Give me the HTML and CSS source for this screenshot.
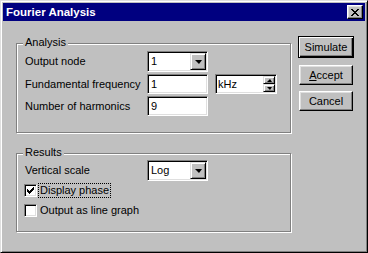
FILE: index.html
```html
<!DOCTYPE html>
<html>
<head>
<meta charset="utf-8">
<link rel="stylesheet" href="styles.css">
</head>
<body>
<div class="win">
  <div class="titlebar">
    <span class="title">Fourier Analysis</span>
    <span class="close"><svg width="8" height="7" viewBox="0 0 8 7" shape-rendering="crispEdges"><path d="M0 0h2v1h-2zM6 0h2v1h-2zM1 1h2v1h-2zM5 1h2v1h-2zM2 2h4v1h-4zM3 3h2v1h-2zM2 4h4v1h-4zM1 5h2v1h-2zM5 5h2v1h-2zM0 6h2v1h-2zM6 6h2v1h-2z" fill="#000"/></svg></span>
  </div>
  <div class="main">
    <div class="left">
      <div class="group g1">
        <div class="caption">Analysis</div>
        <div class="row r-combo">
          <span class="lbl">Output node</span>
          <div class="combo sunken"><span class="val">1</span><span class="ddbtn"><i class="arrow"></i></span></div>
        </div>
        <div class="row r-edit">
          <span class="lbl">Fundamental frequency</span>
          <div class="edit sunken"><span class="val">1</span></div>
          <div class="spin sunken"><span class="val">kHz</span><span class="spinbtns"><span class="sb"><i class="up"></i></span><span class="sb"><i class="dn"></i></span></span></div>
        </div>
        <div class="row r-edit">
          <span class="lbl">Number of harmonics</span>
          <div class="edit sunken"><span class="val">9</span></div>
        </div>
      </div>
      <div class="group g2">
        <div class="caption">Results</div>
        <div class="row r-combo">
          <span class="lbl">Vertical scale</span>
          <div class="combo sunken"><span class="val">Log</span><span class="ddbtn"><i class="arrow"></i></span></div>
        </div>
        <div class="check c1">
          <span class="box sunken"><svg width="7" height="7" viewBox="0 0 7 7" shape-rendering="crispEdges"><path d="M6 0h1v3h-1zM5 1h1v3h-1zM4 2h1v3h-1zM3 3h1v3h-1zM2 4h1v3h-1zM1 3h1v3h-1zM0 2h1v3h-1z" fill="#000"/></svg></span>
          <span class="ctext focus">Display phase</span>
        </div>
        <div class="check c2">
          <span class="box sunken"></span>
          <span class="ctext">Output as line graph</span>
        </div>
      </div>
    </div>
    <div class="right">
      <div class="btn default">Simulate</div>
      <div class="btn b2"><u>A</u>ccept</div>
      <div class="btn b3">Cancel</div>
    </div>
  </div>
</div>
</body>
</html>
```
FILE: styles.css
```css
html, body { margin: 0; padding: 0; background: #c0c0c0; }
body { font-family: "Liberation Sans", Arial, sans-serif; font-size: 11px; color: #000; }
.win {
  width: 368px; height: 253px; box-sizing: border-box;
  background: #c0c0c0;
  border: 1px solid; border-color: #dfdfdf #000 #000 #dfdfdf;
  box-shadow: inset 1px 1px #fff, inset -1px -1px #808080;
  padding: 2px;
}
.titlebar {
  height: 18px; background: #000080; display: flex; align-items: center;
  justify-content: space-between; padding: 0 2px 0 3px;
}
.title { color: #fff; font-weight: bold; font-size: 11.5px; line-height: 13px; }
.close {
  width: 16px; height: 14px; box-sizing: border-box; background: #c0c0c0;
  border: 1px solid; border-color: #fff #000 #000 #fff;
  box-shadow: inset -1px -1px #808080, inset 1px 1px #dfdfdf;
  display: flex; align-items: center; justify-content: center;
}
.close svg { display: block; margin-left: -1px; }
.main { display: flex; padding-left: 13px; }
.left { width: 275px; }
.group {
  border: 1px solid #808080;
  box-shadow: inset 1px 1px #fff, 1px 1px #fff;
  padding: 0 8px; box-sizing: border-box;
  display: flex; flex-direction: column;
}
.g1 { margin-top: 22px; height: 90px; }
.g2 { margin-top: 20px; height: 79px; }
.caption {
  align-self: flex-start; background: #c0c0c0; line-height: 13px;
  margin: -8px 0 0 -2px; padding: 0 2px;
}
.row { display: flex; align-items: center; }
.g1 .r-combo { margin-top: 2px; }
.g2 .r-combo { margin-top: 1px; }
.r-edit { margin-top: 2px; }
.lbl { width: 122px; line-height: 13px; }
.sunken {
  border: 1px solid; border-color: #808080 #fff #fff #808080;
  box-shadow: inset 1px 1px #000, inset -1px -1px #dfdfdf;
  background: #fff; box-sizing: border-box;
}
.combo { width: 61px; height: 21px; display: flex; padding: 1px; }
.edit { width: 61px; height: 20px; display: flex; padding: 1px; }
.spin { width: 62px; height: 20px; display: flex; padding: 1px; margin-left: 7px; }
.val { flex: 1; padding-left: 2px; line-height: 16px; }
.combo .val { line-height: 17px; }
.spin .val { padding-left: 1px; }
.ddbtn {
  width: 16px; height: 17px; box-sizing: border-box; background: #c0c0c0;
  border: 1px solid; border-color: #dfdfdf #000 #000 #dfdfdf;
  box-shadow: inset 1px 1px #fff, inset -1px -1px #808080;
  display: flex; align-items: center; justify-content: center;
}
.arrow { width: 0; height: 0; border-left: 4px solid transparent; border-right: 3px solid transparent; border-top: 4px solid #000; margin-left: 1px; }
.spinbtns { width: 12px; display: flex; flex-direction: column; }
.sb {
  flex: 1; box-sizing: border-box; background: #c0c0c0;
  border: 1px solid; border-color: #dfdfdf #000 #000 #dfdfdf;
  box-shadow: inset 1px 1px #fff, inset -1px -1px #808080;
  display: flex; align-items: center; justify-content: center;
}
.up { width: 0; height: 0; border-left: 3px solid transparent; border-right: 2px solid transparent; border-bottom: 3px solid #000; }
.dn { width: 0; height: 0; border-left: 3px solid transparent; border-right: 2px solid transparent; border-top: 3px solid #000; }
.check { display: flex; align-items: center; height: 17px; margin-left: -1px; }
.c1 { margin-top: 1px; }
.c2 { margin-top: 3px; }
.box { width: 13px; height: 13px; display: flex; align-items: center; justify-content: center; }
.box svg { display: block; }
.ctext { line-height: 13px; padding: 0 1px; margin-left: 1px; border: 1px solid transparent; }
.focus { border: 1px dotted #000; }
.right { margin-left: 7px; display: flex; flex-direction: column; }
.btn {
  width: 54px; height: 20px; box-sizing: border-box; background: #c0c0c0;
  border: 1px solid; border-color: #fff #000 #000 #fff;
  box-shadow: inset -1px -1px #808080, inset 1px 1px #dfdfdf;
  display: flex; align-items: center; justify-content: center; line-height: 13px;
}
.btn.default {
  width: 56px; height: 22px; margin-top: 15px;
  border: 1px solid #000;
  box-shadow: inset 1px 1px #fff, inset -1px -1px #000, inset -2px -2px #808080;
}
.b2 { margin-top: 7px; margin-left: 1px; }
.b3 { margin-top: 6px; margin-left: 1px; }
u { text-decoration: underline; }
```
